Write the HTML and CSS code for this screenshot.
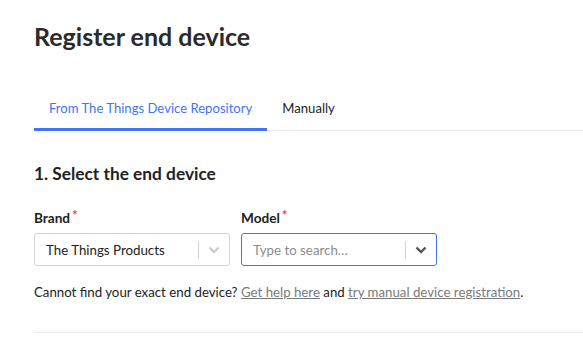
FILE: index.html
```html
<!DOCTYPE html>
<html>
<head>
  <title>Register end device</title>
  <link rel="stylesheet" href="styles.css">
</head>
<body>
  <div class="page">
    <h1 class="page-title">Register end device</h1>

    <div class="tabs">
      <div class="tab tab-active">From The Things Device Repository</div>
      <div class="tab">Manually</div>
    </div>

    <h2 class="section-title">1. Select the end device</h2>

    <div class="fields">
      <div class="field">
        <label class="field-label">Brand<span class="req">*</span></label>
        <div class="select">
          <span class="select-value">The Things Products</span>
          <span class="select-sep"></span>
          <svg class="chevron chevron-light" width="12" height="8" viewBox="0 0 12 8">
            <path d="M1.5 1.5 L6 6 L10.5 1.5" fill="none" stroke-width="2"/>
          </svg>
        </div>
      </div>
      <div class="field">
        <label class="field-label">Model<span class="req">*</span></label>
        <div class="select select-focus">
          <span class="select-placeholder">Type to search…</span>
          <span class="select-sep"></span>
          <svg class="chevron chevron-dark" width="12" height="8" viewBox="0 0 12 8">
            <path d="M1.5 1.5 L6 6 L10.5 1.5" fill="none" stroke-width="2.4"/>
          </svg>
        </div>
      </div>
    </div>

    <p class="help">Cannot find your exact end device? <a href="#">Get help here</a> and <a href="#">try manual device registration</a>.</p>

    <div class="divider"></div>
  </div>
</body>
</html>
```

FILE: styles.css
```css
body {
  margin: 0;
  background: #fff;
  font-family: "Lato", "Open Sans", sans-serif;
  color: #222;
}

.page {
  padding: 0 0 0 34px;
}

.page-title {
  margin: 0;
  padding-top: 20px;
  font-size: 25px;
  font-weight: 700;
  line-height: 32px;
  color: #2a2a2a;
}

.tabs {
  display: flex;
  margin-top: 45px;
  border-bottom: 1px solid #ececec;
}

.tab {
  padding: 0 15px;
  height: 31px;
  line-height: 22px;
  font-size: 13.1px;
  color: #222;
  border-bottom: 3px solid transparent;
  margin-bottom: -1px;
}

.tab-active {
  color: #4274f6;
  border-bottom-color: #4274f6;
}

.section-title {
  margin: 30px 0 0;
  font-size: 17.3px;
  font-weight: 700;
  line-height: 26px;
  color: #222;
}

.fields {
  display: flex;
  gap: 11px;
  margin-top: 22px;
}

.field {
  width: 196px;
}

.field-label {
  display: block;
  font-size: 13.6px;
  font-weight: 700;
  line-height: 18px;
  margin-bottom: 6px;
  color: #222;
}

.req {
  color: #f5454f;
  margin-left: 2px;
  position: relative;
  top: -3px;
}

.select {
  display: flex;
  align-items: center;
  height: 33px;
  box-sizing: border-box;
  border: 1px solid #d6d6d6;
  border-radius: 3px;
  padding: 0 0 0 11px;
  font-size: 13.3px;
}

.select-focus {
  border-color: #4274f6;
}

.select-value {
  flex: 1;
  color: #222;
}

.select-placeholder {
  flex: 1;
  color: #8c8c8c;
}

.select-sep {
  width: 1px;
  height: 18px;
  background: #d0d0d0;
}

.chevron {
  margin: 0 9px 0 9px;
}

.chevron-light path {
  stroke: #c8c8c8;
}

.chevron-dark path {
  stroke: #555;
}

.help {
  margin: 16px 0 0;
  font-size: 13.25px;
  line-height: 20px;
  color: #222;
}

.help a {
  color: #7a7a7a;
}

.divider {
  margin-top: 30px;
  height: 1px;
  background: #ececec;
}
```
